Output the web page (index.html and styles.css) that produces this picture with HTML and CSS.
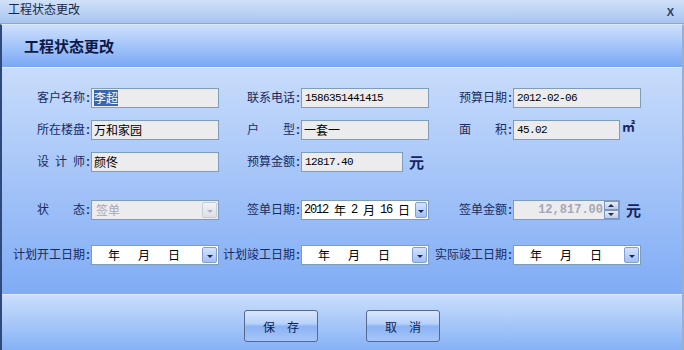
FILE: index.html
```html
<!DOCTYPE html>
<html lang="zh-CN">
<head>
    <meta charset="UTF-8">
    <title>工程状态更改</title>
    <link rel="stylesheet" href="styles.css">
</head>
<body>
    <div class="window">
        <div class="titlebar">
            <span class="title">工程状态更改</span>
            <span class="close">X</span>
        </div>
        <div class="frame">
            <div class="header"><h2>工程状态更改</h2></div>
            <div class="content">
                <div class="row">
                    <label>客户名称<b>:</b></label>
                    <div class="field"><div class="box"><span class="sel">李超</span></div></div>
                    <label>联系电话<b>:</b></label>
                    <div class="field"><div class="box"><span class="num">1586351441415</span></div></div>
                    <label>预算日期<b>:</b></label>
                    <div class="field"><div class="box"><span class="num">2012-02-06</span></div></div>
                </div>
                <div class="row">
                    <label>所在楼盘<b>:</b></label>
                    <div class="field"><div class="box">万和家园</div></div>
                    <label>户　　型<b>:</b></label>
                    <div class="field"><div class="box">一套一</div></div>
                    <label>面　　积<b>:</b></label>
                    <div class="field"><div class="box w107"><span class="num">45.02</span></div><span class="unit sq">㎡</span></div>
                </div>
                <div class="row">
                    <label>设&ensp;计&ensp;师<b>:</b></label>
                    <div class="field"><div class="box">颜佟</div></div>
                    <label>预算金额<b>:</b></label>
                    <div class="field"><div class="box w102"><span class="num">12817.40</span></div><span class="unit">元</span></div>
                </div>
                <div class="row gap-lg">
                    <label>状　　态<b>:</b></label>
                    <div class="field"><div class="box"><span class="muted">签单</span><span class="drop off"></span></div></div>
                    <label>签单日期<b>:</b></label>
                    <div class="field">
                        <div class="box date">
                            <span class="num">2012</span><span class="u">年</span><span class="num">2</span><span class="u">月</span><span class="num">16</span><span class="u">日</span>
                            <span class="drop"></span>
                        </div>
                    </div>
                    <label>签单金额<b>:</b></label>
                    <div class="field">
                        <div class="box w107">
                            <span class="amount">12,817.00</span>
                            <span class="spin"><i class="up"></i><i class="down"></i></span>
                        </div>
                        <span class="unit">元</span>
                    </div>
                </div>
                <div class="row gap-md">
                    <label>计划开工日期<b>:</b></label>
                    <div class="field"><div class="box date empty"><span>年</span><span>月</span><span>日</span><span class="drop"></span></div></div>
                    <label>计划竣工日期<b>:</b></label>
                    <div class="field"><div class="box date empty"><span>年</span><span>月</span><span>日</span><span class="drop"></span></div></div>
                    <label>实际竣工日期<b>:</b></label>
                    <div class="field"><div class="box date empty"><span>年</span><span>月</span><span>日</span><span class="drop"></span></div></div>
                </div>
            </div>
            <div class="footer">
                <button class="btn">保存</button>
                <button class="btn">取消</button>
            </div>
        </div>
    </div>
</body>
</html>
```

FILE: styles.css
```css
body {
    margin: 0;
    font-family: "Noto Sans CJK SC", sans-serif;
    font-size: 12px;
    background: #a8c5f0;
}
.window {
    width: 684px;
    height: 350px;
    display: flex;
    flex-direction: column;
    overflow: hidden;
}
.titlebar {
    height: 23px;
    border-bottom: 1px solid #88a8da;
    background: linear-gradient(#d0e1f8, #a8c5f0);
    display: flex;
    justify-content: space-between;
    align-items: flex-start;
    padding: 0 10px 0 8px;
    color: #1a2748;
}
.title {
    line-height: 14px;
    margin-top: 2px;
}
.close {
    font-family: "Liberation Sans", sans-serif;
    font-weight: bold;
    font-size: 11px;
    line-height: 12px;
    margin-top: 6px;
    color: #2c3c62;
}
.frame {
    flex: 1;
    display: flex;
    flex-direction: column;
    border-left: 2px solid #2e4a7c;
    border-right: 2px solid #98aed2;
    border-top: 1px solid #dbe7fb;
}
.header {
    height: 42px;
    display: flex;
    align-items: center;
    padding-left: 22px;
    background: linear-gradient(#cde0fd, #79a8f5);
    border-bottom: 1px solid #e4eefd;
}
.header h2 {
    margin: 0;
    font-size: 15px;
    line-height: 16px;
    font-weight: bold;
    color: #0c1848;
}
.content {
    height: 226px;
    box-sizing: border-box;
    padding: 19px 0 0 8px;
    background: linear-gradient(#c8dcfb, #80acf5);
}
.row {
    display: grid;
    grid-template-columns: 81px 128px 82px 128px 84px 128px;
    height: 20px;
}
.row + .row {
    margin-top: 12px;
}
.row.gap-lg {
    margin-top: 28px;
}
.row.gap-md {
    margin-top: 25px;
}
.row label {
    text-align: right;
    line-height: 20px;
    color: #1a2a60;
    white-space: nowrap;
}
.row label b {
    display: inline-block;
    width: 6px;
    text-align: center;
    font-family: "Liberation Sans", sans-serif;
    font-weight: bold;
}
.field {
    display: flex;
    align-items: center;
}
.box {
    width: 128px;
    height: 20px;
    box-sizing: border-box;
    border: 1px solid #7f9db9;
    background: #ecebee;
    display: flex;
    align-items: center;
    padding-left: 2px;
    color: #000;
    line-height: 16px;
    white-space: nowrap;
}
.box.w102 {
    width: 102px;
}
.box.w107 {
    width: 107px;
}
.num {
    font-family: "Liberation Mono", monospace;
    font-size: 11px;
    letter-spacing: -0.6px;
    padding-left: 1px;
}
.sel {
    background: #3a66b0;
    color: #fff;
}
.muted {
    color: #a8a8b2;
    padding-left: 2px;
}
.unit {
    font-weight: bold;
    font-size: 15px;
    line-height: 20px;
    color: #13245e;
    margin-left: 6px;
}
.unit.sq {
    font-size: 13px;
    margin-left: 2px;
    align-self: flex-start;
    line-height: 14px;
}
.date {
    background: #fff;
}
.date .num {
    padding-left: 0;
    font-size: 12px;
    letter-spacing: -1.2px;
}
.date .u {
    margin: 0 5px 0 6px;
}
.date.empty {
    padding-left: 16px;
}
.date.empty span {
    margin-right: 18px;
}
.drop {
    width: 15px;
    height: 16px;
    margin-left: auto;
    margin-right: 1px;
    box-sizing: border-box;
    border: 1px solid #7f9fd8;
    border-radius: 2px;
    background: linear-gradient(#d4e3fb, #a3c0f1);
    display: flex;
    align-items: center;
    justify-content: center;
}
.date.empty .drop {
    margin-right: 1px;
}
.drop::after {
    content: "";
    margin-top: 3px;
    border-top: 3px solid #17285c;
    border-left: 3px solid transparent;
    border-right: 3px solid transparent;
}
.drop.off {
    border-color: #c6ccda;
    background: linear-gradient(#f2f2f5, #dcdfe7);
}
.drop.off::after {
    border-top-color: #aeb2c0;
}
.amount {
    margin-left: auto;
    margin-right: 1px;
    font-family: "Liberation Mono", monospace;
    font-weight: bold;
    font-size: 12px;
    color: #a6a6b4;
}
.spin {
    width: 15px;
    height: 18px;
    display: flex;
    flex-direction: column;
}
.spin i {
    flex: 1;
    box-sizing: border-box;
    border: 1px solid #7f95bd;
    background: linear-gradient(#e4ecf8, #bccde9);
    display: flex;
    align-items: center;
    justify-content: center;
}
.spin .up::after {
    content: "";
    border-bottom: 3px solid #1e2c55;
    border-left: 3px solid transparent;
    border-right: 3px solid transparent;
}
.spin .down::after {
    content: "";
    border-top: 3px solid #1e2c55;
    border-left: 3px solid transparent;
    border-right: 3px solid transparent;
}
.footer {
    flex: 1;
    border-top: 1px solid #e0ebfd;
    background: linear-gradient(#cadefc, #86b1f6);
    display: flex;
    justify-content: center;
    align-items: flex-start;
    gap: 48px;
    padding-top: 15px;
}
.btn {
    width: 74px;
    height: 32px;
    border: 1px solid #56698f;
    border-radius: 3px;
    background: linear-gradient(#d8e7fc 0%, #b7d1f9 42%, #8cb3f4 52%, #a6c6f7 100%);
    font-family: "Noto Sans CJK SC", sans-serif;
    font-size: 12px;
    color: #0e1d50;
    letter-spacing: 12px;
    padding: 0 0 0 12px;
    cursor: pointer;
}
```
